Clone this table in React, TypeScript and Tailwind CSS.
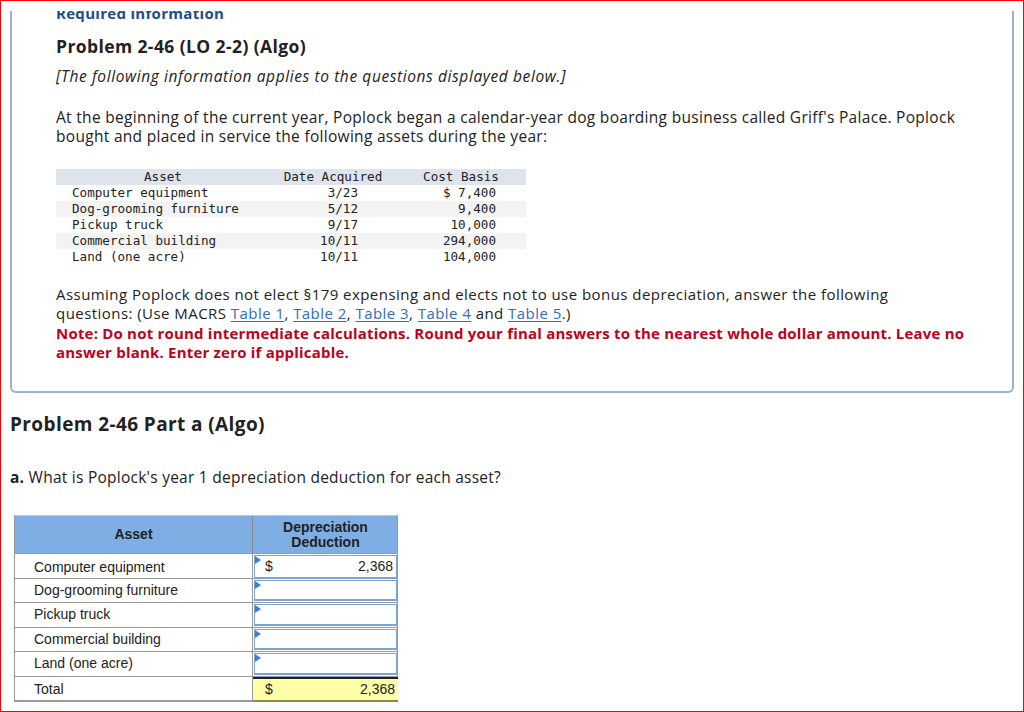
import React from "react";

const assets = [
  { name: "Computer equipment", date: "3/23", cost: "$ 7,400" },
  { name: "Dog-grooming furniture", date: "5/12", cost: "9,400" },
  { name: "Pickup truck", date: "9/17", cost: "10,000" },
  { name: "Commercial building", date: "10/11", cost: "294,000" },
  { name: "Land (one acre)", date: "10/11", cost: "104,000" },
];

const answers = [
  { name: "Computer equipment", value: "2,368" },
  { name: "Dog-grooming furniture", value: "" },
  { name: "Pickup truck", value: "" },
  { name: "Commercial building", value: "" },
  { name: "Land (one acre)", value: "" },
];

const TableLink = ({ children }: { children: React.ReactNode }) => (
  <span className="text-[#2f6fb8] underline underline-offset-2">{children}</span>
);

const Marker = () => (
  <svg className="absolute left-0 top-0" width="6" height="8" viewBox="0 0 6 8">
    <path d="M0 0 L6 4 L0 8 Z" fill="#3b7dd8" />
  </svg>
);

export default function App() {
  return (
    <div
      className="h-[712px] overflow-hidden border border-[#ff0000] bg-white text-[#222]"
      style={{ fontFamily: "'Open Sans', Lato, sans-serif" }}
    >
      {/* Required information box */}
      <div className="mx-[9px] mt-[10px] rounded-b-md border-x-2 border-b-2 border-[#9bb1cd] pb-[29px] pl-[44px] pr-[44px]">
        <div className="h-[13px] overflow-hidden">
          <div className="-mt-[7px] text-[15px] font-bold leading-[18px] tracking-[0.3px] text-[#1f4c8a]">Required information</div>
        </div>
        <h2 className="mt-[10px] text-[17.5px] font-bold leading-[24px] tracking-[0.4px] text-[#222]">Problem 2-46 (LO 2-2) (Algo)</h2>
        <p className="mt-[9px] text-[15.5px] italic leading-[19px] tracking-[0.6px]">
          [The following information applies to the questions displayed below.]
        </p>
        <p className="mt-[22px] text-[15.5px] leading-[19px] tracking-[0.3px]">
          At the beginning of the current year, Poplock began a calendar-year dog boarding business called Griff's Palace. Poplock bought and placed in service the following assets during the year:
        </p>

        <div
          className="mt-[23px] w-[470px] text-[12.6px] leading-[16px] text-[#222]"
          style={{ fontFamily: "'DejaVu Sans Mono', 'Liberation Mono', monospace" }}
        >
          <div className="grid grid-cols-[214px_126px_130px] bg-[#dfe3ec]">
            <div className="text-center">Asset</div>
            <div className="text-center">Date Acquired</div>
            <div className="text-center">Cost Basis</div>
          </div>
          {assets.map((a, i) => (
            <div
              key={a.name}
              className={`grid grid-cols-[214px_126px_130px] ${i % 2 === 1 ? "bg-[#f3f3f3]" : "bg-white"}`}
            >
              <div className="pl-4 whitespace-pre">{a.name}</div>
              <div className="pr-[38px] text-right">{a.date}</div>
              <div className="pr-[30px] text-right whitespace-pre">{a.cost}</div>
            </div>
          ))}
        </div>

        <p className="mt-[20px] text-[15px] leading-[19px] tracking-[0.45px]">
          Assuming Poplock does not elect §179 expensing and elects not to use bonus depreciation, answer the following questions: (Use MACRS <TableLink>Table 1</TableLink>, <TableLink>Table 2</TableLink>, <TableLink>Table 3</TableLink>, <TableLink>Table 4</TableLink> and <TableLink>Table 5</TableLink>.)
        </p>
        <p className="mt-[1px] text-[15px] font-bold leading-[19px] tracking-[0.2px] text-[#c1001b]">
          Note: Do not round intermediate calculations. Round your final answers to the nearest whole dollar amount. Leave no answer blank. Enter zero if applicable.
        </p>
      </div>

      {/* Part a */}
      <div className="pl-[9px]">
        <h2 className="mt-[18px] text-[19px] font-bold leading-[26px] tracking-[0.4px] text-[#222]">Problem 2-46 Part a (Algo)</h2>
        <p className="mt-[30px] text-[15.5px] leading-[20px] tracking-[0.25px]">
          <span className="font-bold">a.</span> What is Poplock's year 1 depreciation deduction for each asset?
        </p>

        <div
          className="ml-[4px] mt-[28px] w-[384px] border-l border-r border-[#9a9a9a] text-[14px] text-[#222]"
          style={{ fontFamily: "'Liberation Sans', Arial, sans-serif" }}
        >
          <div className="grid h-[38px] grid-cols-[238px_145px] border-t border-[#c8c8c8] bg-[#7eaee4] font-bold">
            <div className="flex items-center justify-center border-r border-[#8a8a8a]">Asset</div>
            <div className="flex items-center justify-center text-center leading-[15px]">
              Depreciation
              <br />
              Deduction
            </div>
          </div>
          {answers.map((r) => (
            <div key={r.name} className="grid h-[24.5px] grid-cols-[238px_145px] border-t border-[#9a9a9a]">
              <div className="flex items-center border-r border-[#9a9a9a] pl-[19px]">{r.name}</div>
              <div className="relative m-[1px] flex items-center justify-between border border-b-2 border-[#7fa3cf] bg-white px-[10px] pr-[3px]">
                <Marker />
                <span>{r.value ? "$" : ""}</span>
                <span>{r.value}</span>
              </div>
            </div>
          ))}
          <div className="grid h-[26px] grid-cols-[238px_145px] border-t border-b-2 border-[#9a9a9a]">
            <div className="flex items-center border-r border-[#9a9a9a] pl-[19px]">Total</div>
            <div className="flex items-center justify-between border-t-2 border-b-2 border-t-[#222] border-b-[#8f8a4a] bg-[#ffffa8] pl-[12px] pr-[3px]">
              <span>$</span>
              <span>2,368</span>
            </div>
          </div>
        </div>
      </div>
    </div>
  );
}
